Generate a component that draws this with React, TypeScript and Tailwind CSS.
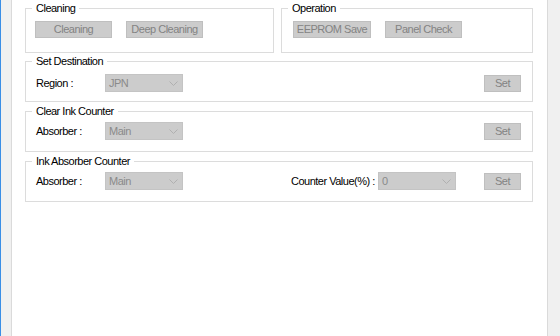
import type { ReactNode } from 'react'

const font = { fontFamily: "'Liberation Sans', Arial, sans-serif" }

function GroupBox ({ title, className, children }: { title: string, className?: string, children?: ReactNode }): JSX.Element {
  return (
    <div className={`relative border border-[#dcdcdc] ${className ?? ''}`}>
      <span className="absolute -top-[9px] left-[6px] bg-white px-[4px] leading-[16px] text-black">{title}</span>
      {children}
    </div>
  )
}

function Button ({ label, className }: { label: string, className?: string }): JSX.Element {
  return (
    <div className={`flex h-[17px] items-center justify-center border border-[#bfbfbf] bg-[#cccccc] text-[#838383] ${className ?? 'w-[77px]'}`}>
      {label}
    </div>
  )
}

function Combo ({ value }: { value: string }): JSX.Element {
  return (
    <div className="flex h-[18px] w-[78px] items-center justify-between border border-[#c4c4c4] bg-[#cccccc] pl-[3px] pr-[4px] text-[#8a8a8a]">
      <span>{value}</span>
      <svg width="9" height="5" viewBox="0 0 9 5" fill="none">
        <path d="M0.5 0.5 L4.5 4.5 L8.5 0.5" stroke="#b0b0b0" strokeWidth="1" />
      </svg>
    </div>
  )
}

export default function App (): JSX.Element {
  return (
    <div className="flex h-[336px] w-[560px] overflow-hidden whitespace-nowrap bg-[#f0f0f0] text-[11px] tracking-[-0.5px]" style={font}>
      <div className="w-px bg-[#3a8ee6]" />
      <div className="w-[10px]" />
      <div className="flex w-[537px] flex-col border-x border-[#dadada] bg-white pl-[13px] pt-[8px]">
        <div className="flex w-[508px] gap-[7px]">
          <GroupBox title="Cleaning" className="h-[45px] w-[249px]">
            <div className="flex gap-[14px] pl-[9px] pt-[12px]">
              <Button label="Cleaning" />
              <Button label="Deep Cleaning" />
            </div>
          </GroupBox>
          <GroupBox title="Operation" className="h-[45px] w-[252px]">
            <div className="flex gap-[14px] pl-[11px] pt-[12px]">
              <Button label="EEPROM Save" className="w-[78px]" />
              <Button label="Panel Check" />
            </div>
          </GroupBox>
        </div>

        <GroupBox title="Set Destination" className="mt-[8px] h-[41px] w-[508px]">
          <div className="flex items-center pl-[10px] pr-[11px] pt-[12px]">
            <span className="w-[69px] text-black">Region :</span>
            <Combo value="JPN" />
            <Button label="Set" className="ml-auto w-[37px]" />
          </div>
        </GroupBox>

        <GroupBox title="Clear Ink Counter" className="mt-[9px] h-[41px] w-[508px]">
          <div className="flex items-center pl-[10px] pr-[11px] pt-[10px]">
            <span className="w-[69px] text-black">Absorber :</span>
            <Combo value="Main" />
            <Button label="Set" className="ml-auto w-[37px]" />
          </div>
        </GroupBox>

        <GroupBox title="Ink Absorber Counter" className="mt-[9px] h-[41px] w-[508px]">
          <div className="flex items-center pl-[10px] pr-[11px] pt-[10px]">
            <span className="w-[69px] text-black">Absorber :</span>
            <Combo value="Main" />
            <span className="ml-[108px] w-[87px] text-black">Counter Value(%) :</span>
            <Combo value="0" />
            <Button label="Set" className="ml-auto w-[37px]" />
          </div>
        </GroupBox>
      </div>
    </div>
  )
}
